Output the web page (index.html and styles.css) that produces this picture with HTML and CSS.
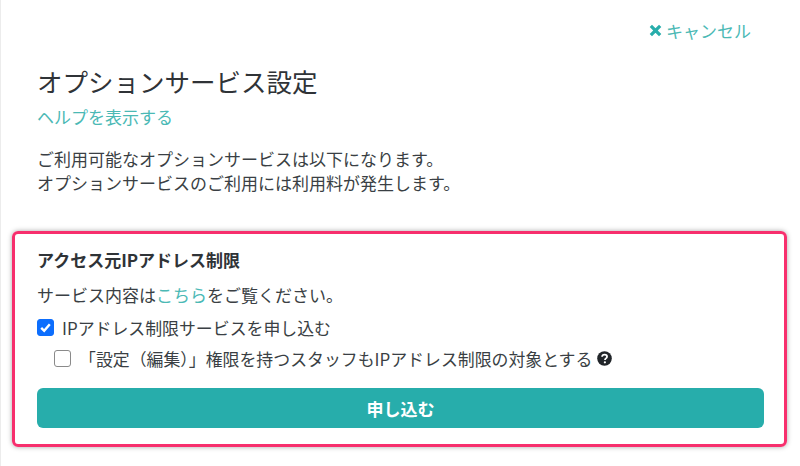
FILE: index.html
```html
<!DOCTYPE html>
<html lang="ja">
<head>
<meta charset="utf-8">
<title>オプションサービス設定</title>
<link rel="stylesheet" href="styles.css">
</head>
<body>
<main class="page">
  <div class="top">
    <a class="cancel" href="#">
      <svg class="x-icon" viewBox="0 0 12 12" aria-hidden="true"><path d="M1.7 1.7 10.3 10.3M10.3 1.7 1.7 10.3" fill="none" stroke="currentColor" stroke-width="3"/></svg>
      <span>キャンセル</span>
    </a>
  </div>
  <div class="intro">
    <h1 class="title">オプションサービス設定</h1>
    <p class="help"><a class="link" href="#">ヘルプを表示する</a></p>
    <p class="desc">ご利用可能なオプションサービスは以下になります。<br>オプションサービスのご利用には利用料が発生します。</p>
  </div>
  <section class="box">
    <h2 class="box-title">アクセス元IPアドレス制限</h2>
    <p class="box-text">サービス内容は<a class="link" href="#">こちら</a>をご覧ください。</p>
    <label class="check">
      <span class="tick checked"><svg viewBox="0 0 16 16" aria-hidden="true"><path d="M3.4 8.4 6.6 11.5 12.6 4.6" fill="none" stroke="#fff" stroke-width="2.6"/></svg></span>
      <span>IPアドレス制限サービスを申し込む</span>
    </label>
    <label class="check sub">
      <span class="tick"></span>
      <span>「設定（編集）」権限を持つスタッフもIPアドレス制限の対象とする</span>
      <svg class="q-icon" viewBox="0 0 16 16" aria-hidden="true"><circle cx="8" cy="8" r="7.8" fill="#212529"/><path d="M5.4 6.2C5.5 4.7 6.6 3.9 8.1 3.9c1.5 0 2.6.9 2.6 2.1 0 1.9-2.2 1.8-2.2 3.5" fill="none" stroke="#fff" stroke-width="1.9"/><circle cx="8.4" cy="12" r="1.2" fill="#fff"/></svg>
    </label>
    <button class="submit" type="button">申し込む</button>
  </section>
</main>
</body>
</html>
```
FILE: styles.css
```css
* { box-sizing: border-box; }
html, body { margin: 0; padding: 0; background: #fff; }
body {
  width: 800px;
  height: 466px;
  overflow: hidden;
  font-family: "Noto Sans CJK JP", "Noto Sans", sans-serif;
  font-size: 17px;
  color: #3a3f44;
}
.page {
  height: 466px;
  padding: 0 13px 0 12px;
  border-left: 1px solid #ececec;
}
.top {
  display: flex;
  justify-content: flex-end;
  padding: 18px 36px 0 0;
  height: 64px;
}
.cancel {
  display: flex;
  align-items: center;
  gap: 4px;
  height: 24px;
  color: #4bb9b5;
  text-decoration: none;
}
.x-icon { width: 13px; height: 13px; color: #27adab; }
.intro { padding-left: 24px; height: 167px; }
.title {
  margin: 0;
  font-size: 25.5px;
  font-weight: 400;
  line-height: 34px;
  color: #2f3337;
}
.help { margin: 7px 0 0; line-height: 24px; }
.link { color: #4bb9b5; text-decoration: none; }
.desc { margin: 18px 0 0; line-height: 24px; }
.box {
  width: 775px;
  height: 216px;
  margin-left: -1px;
  padding: 14px 20px 0 22px;
  border: 3px solid #f72f6d;
  border-radius: 6px;
  box-shadow: 0 0 5px rgba(0, 0, 0, .35);
}
.box-title {
  margin: 0;
  font-size: 17px;
  font-weight: 700;
  line-height: 24px;
  color: #2f3337;
}
.box-text { margin: 11px 0 0; line-height: 24px; }
.check {
  display: flex;
  align-items: center;
  gap: 8px;
  height: 28px;
  margin-top: 6px;
  font-size: 16.9px;
}
.sub { margin-top: 3px; padding-left: 17px; }
.tick {
  flex: none;
  width: 17px;
  height: 17px;
  border: 1px solid #8a8a8a;
  border-radius: 3px;
  background: #fff;
  display: block;
}
.tick.checked { background: #0d6efd; border-color: #0d6efd; }
.tick svg { display: block; width: 15px; height: 15px; }
.q-icon { width: 15px; height: 15px; margin-left: -3px; }
.submit {
  display: block;
  width: 100%;
  height: 40px;
  margin-top: 16px;
  border: 0;
  border-radius: 6px;
  background: #27adab;
  color: #fff;
  font: 700 17px "Noto Sans CJK JP", "Noto Sans", sans-serif;
}
```
